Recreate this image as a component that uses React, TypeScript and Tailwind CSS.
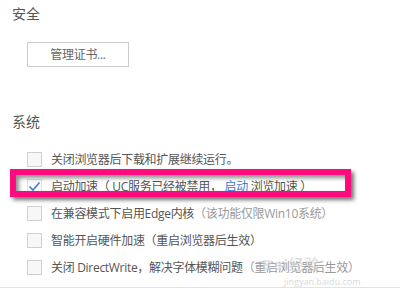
const font = "font-['Open_Sans','Noto_Sans_CJK_SC',sans-serif]";

const Box = ({ checked = false }: { checked?: boolean }) => (
  <span
    className={`w-[15px] h-[15px] shrink-0 flex items-center justify-center border ${
      checked ? "border-[#e2e2e2] bg-[#fafafa]" : "border-[#d0d0d0] bg-[#f7f7f7]"
    }`}
  >
    {checked && (
      <svg width="13" height="11" viewBox="0 0 13 11">
        <path d="M1.5 5.5 L5 9 L11.5 1.5" fill="none" stroke="#3b7fd9" strokeWidth="1.6" />
      </svg>
    )}
  </span>
);

const Row = ({ children, checked, highlight }: { children: React.ReactNode; checked?: boolean; highlight?: boolean }) => (
  <div className="relative h-[27px] flex items-center pl-[27px] gap-[9px] text-[12px] text-[#555] tracking-[-0.3px] whitespace-pre">
    <Box checked={checked} />
    <span>{children}</span>
    {highlight && (
      <div className="absolute left-[10px] top-[-4px] w-[341px] h-[28px] border-[6px] border-[#ff0a7f] shadow-[3px_3px_4px_rgba(0,0,0,0.55),inset_3px_3px_4px_rgba(0,0,0,0.45)]" />
    )}
  </div>
);

export default function App() {
  return (
    <div className={`relative w-[400px] h-[300px] bg-white overflow-hidden ${font}`}>
      <div className="pt-[4px] pl-[12px] text-[14px] leading-[20px] text-[#555]">安全</div>
      <div className="mt-[18px] ml-[27px] w-[102px] h-[25px] border border-[#cccccc] flex items-center justify-center text-[12px] text-[#666] tracking-[-0.3px]">
        管理证书...
      </div>
      <div className="mt-[45px] pl-[12px] text-[14px] leading-[20px] text-[#555]">系统</div>

      <div className="mt-[14px]">
        <Row>关闭浏览器后下载和扩展继续运行。</Row>
        <Row checked highlight>
          启动加速（ UC服务已经被禁用， <span className="text-[#3a7bd5]">启动</span> 浏览加速 ）
        </Row>
        <Row>
          在兼容模式下启用Edge内核<span className="text-[#999]">（该功能仅限Win10系统）</span>
        </Row>
        <Row>智能开启硬件加速（重启浏览器后生效）</Row>
        <Row>
          关闭 DirectWrite，解决字体模糊问题<span className="text-[#999]">（重启浏览器后生效）</span>
        </Row>
      </div>

      <div className="mt-[6px] h-px bg-[#e3e3e3]" />

      {/* watermark */}
      <div className="absolute left-[262px] top-[257px] text-[#d0d0d0] opacity-60 leading-none pointer-events-none">
        <div className="text-[15px] font-bold tracking-[1px]">Bai经验</div>
      </div>
      <div className="absolute left-[284px] top-[277px] text-[9px] leading-none text-[#dadada] pointer-events-none">
        jingyan.baidu.com
      </div>
    </div>
  );
}
